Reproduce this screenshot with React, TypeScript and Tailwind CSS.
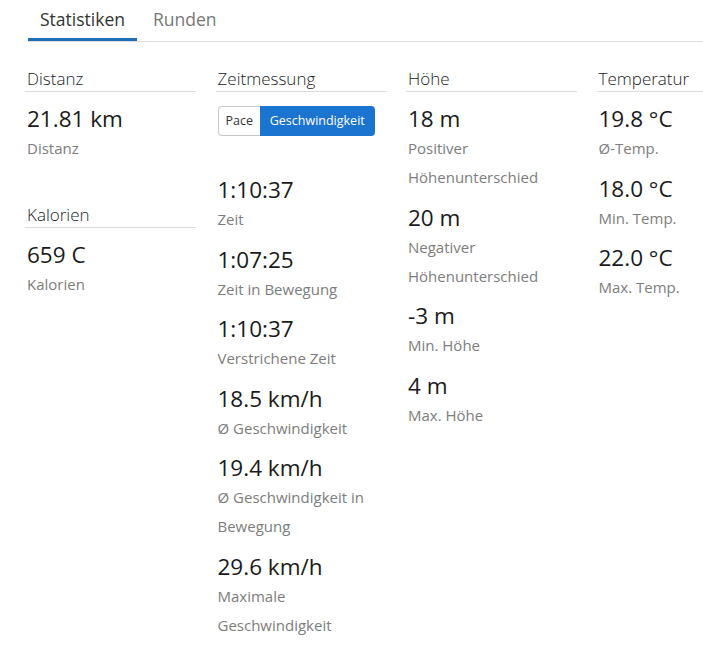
import React from "react";

type Stat = { value: string; label: string[] };

function StatItem({ s }: { s: Stat }) {
  return (
    <div className="mb-[10.5px]">
      <div className="text-[22.5px] leading-[30px] text-[#1a1a1a]">{s.value}</div>
      {s.label.map((l, i) => (
        <div key={i} className="text-[15px] leading-[29px] text-[#7d7d7d]">
          {l}
        </div>
      ))}
    </div>
  );
}

function Header({ title }: { title: string }) {
  return (
    <div className="text-[17px] leading-[24px] font-light text-[#222] border-b border-[#dcdcdc] mb-[12px] -ml-[2px] pl-[2px]">
      {title}
    </div>
  );
}

export default function App() {
  const col2: Stat[] = [
    { value: "1:10:37", label: ["Zeit"] },
    { value: "1:07:25", label: ["Zeit in Bewegung"] },
    { value: "1:10:37", label: ["Verstrichene Zeit"] },
    { value: "18.5 km/h", label: ["Ø Geschwindigkeit"] },
    { value: "19.4 km/h", label: ["Ø Geschwindigkeit in", "Bewegung"] },
    { value: "29.6 km/h", label: ["Maximale", "Geschwindigkeit"] },
  ];
  const col3: Stat[] = [
    { value: "18 m", label: ["Positiver", "Höhenunterschied"] },
    { value: "20 m", label: ["Negativer", "Höhenunterschied"] },
    { value: "-3 m", label: ["Min. Höhe"] },
    { value: "4 m", label: ["Max. Höhe"] },
  ];
  const col4: Stat[] = [
    { value: "19.8 °C", label: ["Ø-Temp."] },
    { value: "18.0 °C", label: ["Min. Temp."] },
    { value: "22.0 °C", label: ["Max. Temp."] },
  ];
  return (
    <div
      className="w-[703px] h-[645px] overflow-hidden bg-white"
      style={{ fontFamily: '"Open Sans", "Noto Sans", sans-serif' }}
    >
      <div className="ml-[28px] flex h-[42px] border-b border-[#dddddd]">
        <div className="px-[12px] pt-[7px] h-[41px] border-b-[3px] border-[#1f6fb8] text-[17.5px] leading-[24px] text-[#333]">
          Statistiken
        </div>
        <div className="ml-[4px] px-[12px] pt-[7px] h-[41px] text-[17.5px] leading-[24px] text-[#777]">
          Runden
        </div>
      </div>
      <div className="mt-[25px] ml-[27px] grid grid-cols-[169px_169px_169px_169px] gap-x-[21.5px] items-start">
        <div>
          <Header title="Distanz" />
          <StatItem s={{ value: "21.81 km", label: ["Distanz"] }} />
          <div className="mt-[40px]">
            <Header title="Kalorien" />
            <StatItem s={{ value: "659 C", label: ["Kalorien"] }} />
          </div>
        </div>
        <div>
          <div className="text-[17px] leading-[24px] font-light text-[#222] border-b border-[#dcdcdc] -ml-[2px] pl-[2px]">
            Zeitmessung
          </div>
          <div className="mt-[14px] flex h-[30px] w-[157px] text-[12.5px]">
            <div className="flex items-center px-[7px] border border-r-0 border-[#c8c8c8] rounded-l-[4px] text-[#333]">
              Pace
            </div>
            <div className="flex-1 flex items-center justify-center rounded-r-[4px] bg-[#1b74cf] text-white">
              Geschwindigkeit
            </div>
          </div>
          <div className="mt-[39px]">
            {col2.map((s, i) => (
              <StatItem key={i} s={s} />
            ))}
          </div>
        </div>
        <div>
          <Header title="Höhe" />
          {col3.map((s, i) => (
            <StatItem key={i} s={s} />
          ))}
        </div>
        <div>
          <Header title="Temperatur" />
          {col4.map((s, i) => (
            <StatItem key={i} s={s} />
          ))}
        </div>
      </div>
    </div>
  );
}
